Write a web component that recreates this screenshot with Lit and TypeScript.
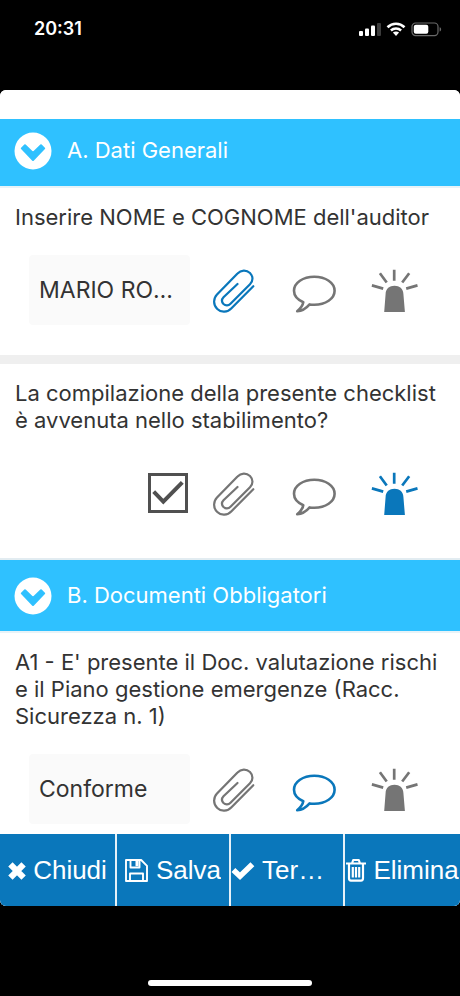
import { LitElement, html, svg, css } from "lit";
import { customElement, property } from "lit/decorators.js";
import { classMap } from "lit/directives/class-map.js";

@customElement("action-icon")
class ActionIcon extends LitElement {
  @property() kind = "clip";
  @property() label = "";
  @property({ type: Boolean }) active = false;

  static styles = css`
    :host { display: flex; justify-content: center; align-items: center; }
    .btn { border: 0; padding: 0; background: none; color: #757575; display: flex; cursor: pointer; }
    .active { color: #0a77bb; }
    svg { width: 48px; height: 48px; }
    .line { fill: none; stroke: currentColor; }
    .solid { fill: currentColor; }
  `;

  drawing() {
    if (this.kind === "clip") {
      return svg`<path class="line" stroke-width="2.2" stroke-linecap="round" d="M43.3 20.2 21.5 42.2C17.5 46.6 11 46.8 7.3 43 3 38.8 3.2 32.5 7 28.5L27.5 7.5C31 3.7 36.5 3.7 40 7 43.3 10.3 43.2 15 40 18.3L20.5 37.8C18.5 39.9 15.4 39.9 13.5 38 11.6 36 11.7 33.3 13.5 31.3L27.5 18"/>`;
    }
    if (this.kind === "comment") {
      return svg`<path class="line" stroke-width="2.6" stroke-linejoin="round" d="M13.3 36.2C7 33.5 4 29.5 4 24.8 4 16.8 13 10.8 24.3 10.8S44.6 16.8 44.6 24.8 35.5 38.8 24.3 38.8C22.7 38.8 21 38.7 19.6 38.4 16.5 42 12 45 7.2 45.2 10.5 42.5 12.8 40 13.3 36.2Z"/>`;
    }
    return svg`<path class="solid" d="M13.2 46 14.6 28C14.8 22.5 18.5 19.7 23.5 19.7S32.2 22.5 32.4 28L33.9 46Z"/>
      <path class="line" stroke-width="2.7" d="M23.2 3.7V14.7M8.9 7.3 15.7 16.5M38.2 7.3 31.2 16.5M.9 19.4 12.2 22.6M46.5 19.4 35.2 22.6"/>`;
  }

  render() {
    return html`<button class=${classMap({ btn: true, active: this.active })} aria-label=${this.label}>
      <svg viewBox="0 0 48 48" aria-hidden="true">${this.drawing()}</svg>
    </button>`;
  }
}

@customElement("section-header")
class SectionHeader extends LitElement {
  @property() heading = "";

  static styles = css`
    :host { display: block; border-bottom: 2px solid #e8f3f8; }
    .title { margin: 0; font-size: 22px; font-weight: 400; }
    .toggle {
      width: 100%; height: 71px; padding: 0 14px; border: 0; background: #2fc1ff; color: #fff;
      font: inherit; display: flex; align-items: center; gap: 15px; text-align: left; cursor: pointer;
    }
    svg { width: 38px; height: 38px; flex: none; }
    .disc { fill: #fff; }
    .mark { fill: #2fc1ff; stroke: #2fc1ff; stroke-width: 2; stroke-linejoin: round; }
  `;

  render() {
    return html`<h2 class="title"><button class="toggle" aria-expanded="true">
      <svg viewBox="0 0 38 38" aria-hidden="true">
        <circle class="disc" cx="19" cy="19" r="18.5"/>
        <path class="mark" d="M11 13.2 19 21 27 13.2 30.2 16.4 19 28 7.8 16.4Z"/>
      </svg>
      <span>${this.heading}</span>
    </button></h2>`;
  }
}

interface Question {
  id: string;
  text: string;
  kind: "text" | "check" | "select";
  value: string;
  active: string;
}

const general: Question[] = [
  { id: "auditor", text: "Inserire NOME e COGNOME dell'auditor", kind: "text", value: "MARIO ROSSI", active: "clip" },
  { id: "site", text: "La compilazione della presente checklist è avvenuta nello stabilimento?", kind: "check", value: "", active: "siren" },
];

const documents: Question[] = [
  { id: "a1", text: "A1 - E' presente il Doc. valutazione rischi e il Piano gestione emergenze (Racc. Sicurezza n. 1)", kind: "select", value: "Conforme", active: "comment" },
];

@customElement("app-root")
class AppRoot extends LitElement {
  static styles = css`
    :host {
      display: flex; flex-direction: column; height: 100vh; background: #000; color: #333;
      font-family: Inter, "Liberation Sans", sans-serif; font-size: 22px; line-height: 27px;
    }
    * { box-sizing: border-box; }
    .status { flex: none; height: 90px; padding: 15px 18px 0 34px; display: flex; justify-content: space-between; align-items: flex-start; color: #fff; }
    .time { font-size: 18px; font-weight: 600; }
    .signals { display: flex; align-items: center; gap: 5px; height: 27px; }
    .signals svg { height: 16px; }
    .sheet { flex: 1; min-height: 0; display: flex; flex-direction: column; background: #fff; border-radius: 6px; overflow: hidden; }
    .strip { flex: none; height: 29px; background: #fff; z-index: 1; }
    .scroll { flex: 1; min-height: 0; overflow: hidden; margin-top: -4px; }
    .question { padding: 16px 15px 30px; }
    .question + .question { border-top: 9px solid #efefef; }
    .rule { border-top: 2px solid #e2ecf1; }
    .label { display: block; }
    .row { display: grid; grid-template-columns: 2fr 3fr; gap: 4px; margin: 24px 10px 0 14px; height: 70px; }
    .actions { display: grid; grid-template-columns: repeat(3, 1fr); }
    .field {
      width: 100%; min-width: 0; height: 70px; border: 0; border-radius: 4px; background: #fafafa; color: #333;
      padding: 0 10px; font: inherit; font-size: 23px; appearance: none; text-overflow: ellipsis; outline: 0;
    }
    .check { display: grid; justify-content: end; align-content: center; padding-right: 2px; }
    .box, .tick { grid-area: 1 / 1; width: 40px; height: 40px; margin: 0; }
    .box { appearance: none; border: 3px solid #505050; background: #fff; }
    .tick { fill: none; stroke: #505050; stroke-width: 4; pointer-events: none; display: none; z-index: 1; }
    .box:checked + .tick { display: block; }
    .footer { flex: none; display: grid; grid-template-columns: 115fr 112fr 112fr 115fr; gap: 2px; background: #e6f1f8; }
    .command {
      min-width: 0; height: 72px; border: 0; padding: 0; background: #0a77bb; color: #fff;
      font-family: "Liberation Sans", Arial, sans-serif; font-size: 26px; line-height: 32px;
      display: flex; align-items: center; justify-content: center; gap: 7px; cursor: pointer;
    }
    .command svg { flex: none; height: 24px; fill: #fff; }
    .caption { min-width: 0; overflow: hidden; text-overflow: ellipsis; white-space: nowrap; }
    .home { flex: none; height: 90px; display: flex; justify-content: center; align-items: flex-end; padding-bottom: 10px; }
    .pill { width: 164px; height: 6px; border-radius: 3px; background: #fff; }
  `;

  control(q: Question) {
    if (q.kind === "text") return html`<input class="field" id=${q.id} type="text" .value=${q.value}>`;
    if (q.kind === "select") return html`<select class="field" id=${q.id}><option>${q.value}</option></select>`;
    return html`<div class="check">
      <input class="box" id=${q.id} type="checkbox" checked>
      <svg class="tick" viewBox="0 0 40 40" aria-hidden="true"><path d="M5.7 18.7 15.3 28.7 34.3 9.3"/></svg>
    </div>`;
  }

  question(q: Question) {
    return html`<div class="question">
      <label class="label" for=${q.id}>${q.text}</label>
      <div class="row">
        ${this.control(q)}
        <div class="actions">
          <action-icon kind="clip" label="Allegati" ?active=${q.active === "clip"}></action-icon>
          <action-icon kind="comment" label="Commento" ?active=${q.active === "comment"}></action-icon>
          <action-icon kind="siren" label="Segnalazione" ?active=${q.active === "siren"}></action-icon>
        </div>
      </div>
    </div>`;
  }

  render() {
    return html`
      <header class="status">
        <span class="time">20:31</span>
        <div class="signals">
          <svg width="22" viewBox="0 0 22 16" fill="#fff" aria-hidden="true">
            <rect x="0" y="10" width="4" height="5" rx="1"/><rect x="6" y="7.5" width="4" height="7.5" rx="1"/>
            <rect x="12" y="4.5" width="4" height="10.5" rx="1"/><rect x="18" y="2" width="4" height="13" rx="1" fill="#3c3c3c"/>
          </svg>
          <svg width="20" viewBox="0 0 20 16" fill="none" stroke="#fff" stroke-width="2.6" aria-hidden="true">
            <path d="M1.5 6.2C6.3 1.6 13.7 1.6 18.5 6.2M4.9 9.5C7.8 6.9 12.2 6.9 15.1 9.5"/>
            <path fill="#fff" stroke="none" d="M6.9 11.6C8.7 10.1 11.3 10.1 13.1 11.6L10 15Z"/>
          </svg>
          <svg width="31" viewBox="0 0 31 16" aria-hidden="true">
            <rect x="1" y="2" width="26" height="12.6" rx="3.6" fill="none" stroke="#6a6a6a" stroke-width="1.2"/>
            <rect x="2.8" y="3.8" width="14.5" height="9" rx="2" fill="#fff"/>
            <path d="M28.6 6.2C30.6 6.8 30.6 9.9 28.6 10.5Z" fill="#6a6a6a"/>
          </svg>
        </div>
      </header>
      <main class="sheet">
        <div class="strip"></div>
        <div class="scroll">
          <section-header heading="A. Dati Generali"></section-header>
          ${general.map((q) => this.question(q))}
          <div class="rule"></div>
          <section-header heading="B. Documenti Obbligatori"></section-header>
          ${documents.map((q) => this.question(q))}
        </div>
        <nav class="footer">
          <button class="command">
            <svg width="18" viewBox="0 0 18 24" aria-hidden="true"><path stroke="#fff" stroke-width="6.2" stroke-linecap="square" d="M4.6 8.6 13.4 17.4M13.4 8.6 4.6 17.4"/></svg>
            <span class="caption">Chiudi</span>
          </button>
          <button class="command">
            <svg width="24" viewBox="0 0 24 24" aria-hidden="true"><path fill="none" stroke="#fff" stroke-width="1.9" stroke-linejoin="round" d="M1 2H16.2L22 7.8V23H1ZM5 23V15.5H18V23M5.5 2V9.5H14.5V2"/><path d="M10.5 3H13.5V8.3H10.5Z"/></svg>
            <span class="caption">Salva</span>
          </button>
          <button class="command">
            <svg width="24" viewBox="0 0 24 24" aria-hidden="true"><path fill="none" stroke="#fff" stroke-width="5.6" d="M2.4 12 9 18.2 21.4 6.2"/></svg>
            <span class="caption">Termina</span>
          </button>
          <button class="command">
            <svg width="20" viewBox="0 0 20 24" aria-hidden="true"><path fill="none" stroke="#fff" stroke-width="2.2" stroke-linejoin="round" d="M0 5.5H20M6 5.5 7.2 2H12.8L14 5.5M3 5.5V20.3Q3 22.6 5 22.6H15Q17 22.6 17 20.3V5.5M6.8 9V19.5M10 9V19.5M13.2 9V19.5"/></svg>
            <span class="caption">Elimina</span>
          </button>
        </nav>
      </main>
      <div class="home"><div class="pill"></div></div>
    `;
  }
}
